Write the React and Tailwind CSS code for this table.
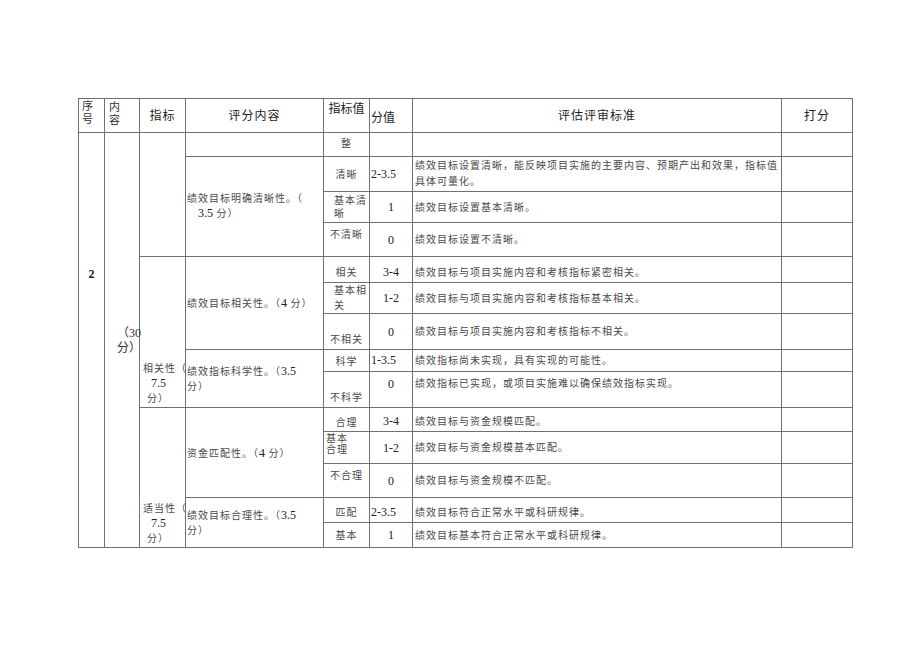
const cell = "border border-[#707070] p-0";
const hd = "text-[12px] text-[#222]";
const sm = "text-[10px] tracking-[1px] text-[#4a4a4a] whitespace-nowrap";
const num = "text-[12px] text-[#222] whitespace-nowrap";

export default function App() {
  return (
    <div className="min-h-screen bg-white pt-[98px] pl-[78px] font-['Liberation_Serif','Noto_Sans_CJK_SC',serif]">
      <table className="table-fixed border-collapse w-[774px]">
        <colgroup>
          <col className="w-[26px]" />
          <col className="w-[35px]" />
          <col className="w-[46px]" />
          <col className="w-[138px]" />
          <col className="w-[46px]" />
          <col className="w-[43px]" />
          <col className="w-[369px]" />
          <col className="w-[71px]" />
        </colgroup>
        <tbody>
          {/* header */}
          <tr className="h-[34px]">
            <td className={`${cell} text-[11px] text-[#333] align-top pl-[3px] pt-[1px] leading-[13px]`}>序<br />号</td>
            <td className={`${cell} text-[11px] text-[#333] align-top pl-[4px] pt-[2px] leading-[13px]`}>内<br />容</td>
            <td className={`${cell} ${hd} align-middle text-center tracking-[1px]`}>指标</td>
            <td className={`${cell} ${hd} align-middle text-center tracking-[1px]`}>评分内容</td>
            <td className={`${cell} ${hd} align-top text-center pt-[1px] whitespace-nowrap`}>指标值</td>
            <td className={`${cell} ${hd} align-middle pl-[1px] pt-[4px]`}>分值</td>
            <td className={`${cell} ${hd} align-middle text-center tracking-[1px]`}>评估评审标准</td>
            <td className={`${cell} ${hd} align-middle text-center tracking-[1px]`}>打分</td>
          </tr>

          {/* 1 */}
          <tr className="h-[24px]">
            <td rowSpan={14} className={`${cell} align-top text-center pt-[132px] text-[12px] font-bold text-[#222]`}>2</td>
            <td rowSpan={14} className={`${cell} align-top pt-[193px] pl-[12px] text-[12px] leading-[15px] text-[#333] whitespace-nowrap`}>
              （30<br />分）
            </td>
            <td rowSpan={4} className={cell}></td>
            <td className={cell}></td>
            <td className={`${cell} ${sm} align-top text-center pt-[3px]`}>整</td>
            <td className={cell}></td>
            <td className={cell}></td>
            <td className={cell}></td>
          </tr>

          {/* 2 */}
          <tr className="h-[35px]">
            <td rowSpan={3} className={`${cell} ${sm} align-middle pl-[1px] leading-[14px]`}>
              绩效目标明确清晰性。（
              <div className="pl-[11px]"><span className="text-[12px] text-[#222] tracking-normal">3.5</span> 分）</div>
            </td>
            <td className={`${cell} ${sm} align-middle text-center`}>清晰</td>
            <td className={`${cell} ${num} align-middle pl-[1px]`}>2-3.5</td>
            <td className={`${cell} ${sm} align-middle pl-[2px] leading-[16px]`}>
              绩效目标设置清晰，能反映项目实施的主要内容、预期产出和效果，指标值<br />具体可量化。
            </td>
            <td className={cell}></td>
          </tr>

          {/* 3 */}
          <tr className="h-[31px]">
            <td className={`${cell} ${sm} align-middle pl-[10px] leading-[13px]`}>基本清<br />晰</td>
            <td className={`${cell} ${num} align-middle text-center`}>1</td>
            <td className={`${cell} ${sm} align-middle pl-[2px]`}>绩效目标设置基本清晰。</td>
            <td className={cell}></td>
          </tr>

          {/* 4 */}
          <tr className="h-[34px]">
            <td className={`${cell} ${sm} align-top text-center pt-[4px]`}>不清晰</td>
            <td className={`${cell} ${num} align-middle text-center`}>0</td>
            <td className={`${cell} ${sm} align-middle pl-[2px]`}>绩效目标设置不清晰。</td>
            <td className={cell}></td>
          </tr>

          {/* 5 */}
          <tr className="h-[26px]">
            <td rowSpan={5} className={`${cell} ${sm} align-bottom pb-[1px] leading-[15px]`}>
              <div className="pl-[3px]">相关性（</div>
              <div className="pl-[11px] text-[12px] text-[#222] tracking-normal">7.5</div>
              <div className="pl-[7px]">分）</div>
            </td>
            <td rowSpan={3} className={`${cell} ${sm} align-middle pl-[1px]`}>
              绩效目标相关性。（<span className="text-[12px] text-[#222] tracking-normal">4</span> 分）
            </td>
            <td className={`${cell} ${sm} align-bottom text-center pb-[2px]`}>相关</td>
            <td className={`${cell} ${num} align-bottom text-center pb-[1px]`}>3-4</td>
            <td className={`${cell} ${sm} align-bottom pl-[2px] pb-[2px]`}>绩效目标与项目实施内容和考核指标紧密相关。</td>
            <td className={cell}></td>
          </tr>

          {/* 6 */}
          <tr className="h-[31px]">
            <td className={`${cell} ${sm} align-middle pl-[10px] leading-[15px]`}>基本相<br />关</td>
            <td className={`${cell} ${num} align-middle text-center`}>1-2</td>
            <td className={`${cell} ${sm} align-middle pl-[2px]`}>绩效目标与项目实施内容和考核指标基本相关。</td>
            <td className={cell}></td>
          </tr>

          {/* 7 */}
          <tr className="h-[36px]">
            <td className={`${cell} ${sm} align-bottom text-center pb-[2px]`}>不相关</td>
            <td className={`${cell} ${num} align-middle text-center`}>0</td>
            <td className={`${cell} ${sm} align-middle pl-[2px]`}>绩效目标与项目实施内容和考核指标不相关。</td>
            <td className={cell}></td>
          </tr>

          {/* 8 */}
          <tr className="h-[22px]">
            <td rowSpan={2} className={`${cell} ${sm} align-middle pl-[1px] leading-[15px]`}>
              绩效指标科学性。（<span className="text-[12px] text-[#222] tracking-normal">3.5</span>
              <br />分）
            </td>
            <td className={`${cell} ${sm} align-bottom text-center pb-[2px]`}>科学</td>
            <td className={`${cell} ${num} align-bottom pl-[1px] pb-[2px]`}>1-3.5</td>
            <td className={`${cell} ${sm} align-bottom pl-[2px] pb-[3px]`}>绩效指标尚未实现，具有实现的可能性。</td>
            <td className={cell}></td>
          </tr>

          {/* 9 */}
          <tr className="h-[36px]">
            <td className={`${cell} ${sm} align-bottom text-center pb-[2px]`}>不科学</td>
            <td className={`${cell} ${num} align-top text-center pt-[3px]`}>0</td>
            <td className={`${cell} ${sm} align-top pl-[2px] pt-[4px]`}>绩效指标已实现，或项目实施难以确保绩效指标实现。</td>
            <td className={cell}></td>
          </tr>

          {/* 10 */}
          <tr className="h-[24px]">
            <td rowSpan={5} className={`${cell} ${sm} align-bottom pb-[1px] leading-[15px]`}>
              <div className="pl-[3px]">适当性（</div>
              <div className="pl-[11px] text-[12px] text-[#222] tracking-normal">7.5</div>
              <div className="pl-[7px]">分）</div>
            </td>
            <td rowSpan={3} className={`${cell} ${sm} align-middle pl-[1px]`}>
              资金匹配性。（<span className="text-[12px] text-[#222] tracking-normal">4</span> 分）
            </td>
            <td className={`${cell} ${sm} align-bottom text-center pb-[1px]`}>合理</td>
            <td className={`${cell} ${num} align-bottom text-center pb-[1px]`}>3-4</td>
            <td className={`${cell} ${sm} align-bottom pl-[2px] pb-[2px]`}>绩效目标与资金规模匹配。</td>
            <td className={cell}></td>
          </tr>

          {/* 11 */}
          <tr className="h-[32px]">
            <td className={`${cell} ${sm} align-top pl-[2px] pt-[1px] leading-[11px]`}>基本<br />合理</td>
            <td className={`${cell} ${num} align-middle text-center`}>1-2</td>
            <td className={`${cell} ${sm} align-middle pl-[2px]`}>绩效目标与资金规模基本匹配。</td>
            <td className={cell}></td>
          </tr>

          {/* 12 */}
          <tr className="h-[34px]">
            <td className={`${cell} ${sm} align-top text-center pt-[4px]`}>不合理</td>
            <td className={`${cell} ${num} align-middle text-center`}>0</td>
            <td className={`${cell} ${sm} align-middle pl-[2px]`}>绩效目标与资金规模不匹配。</td>
            <td className={cell}></td>
          </tr>

          {/* 13 */}
          <tr className="h-[25px]">
            <td rowSpan={2} className={`${cell} ${sm} align-middle pl-[1px] leading-[15px]`}>
              绩效目标合理性。（<span className="text-[12px] text-[#222] tracking-normal">3.5</span>
              <br />分）
            </td>
            <td className={`${cell} ${sm} align-bottom text-center pb-[2px]`}>匹配</td>
            <td className={`${cell} ${num} align-bottom pl-[1px] pb-[1px]`}>2-3.5</td>
            <td className={`${cell} ${sm} align-bottom pl-[2px] pb-[2px]`}>绩效目标符合正常水平或科研规律。</td>
            <td className={cell}></td>
          </tr>

          {/* 14 */}
          <tr className="h-[25px]">
            <td className={`${cell} ${sm} align-middle text-center`}>基本</td>
            <td className={`${cell} ${num} align-middle text-center`}>1</td>
            <td className={`${cell} ${sm} align-middle pl-[2px]`}>绩效目标基本符合正常水平或科研规律。</td>
            <td className={cell}></td>
          </tr>
        </tbody>
      </table>
    </div>
  );
}
